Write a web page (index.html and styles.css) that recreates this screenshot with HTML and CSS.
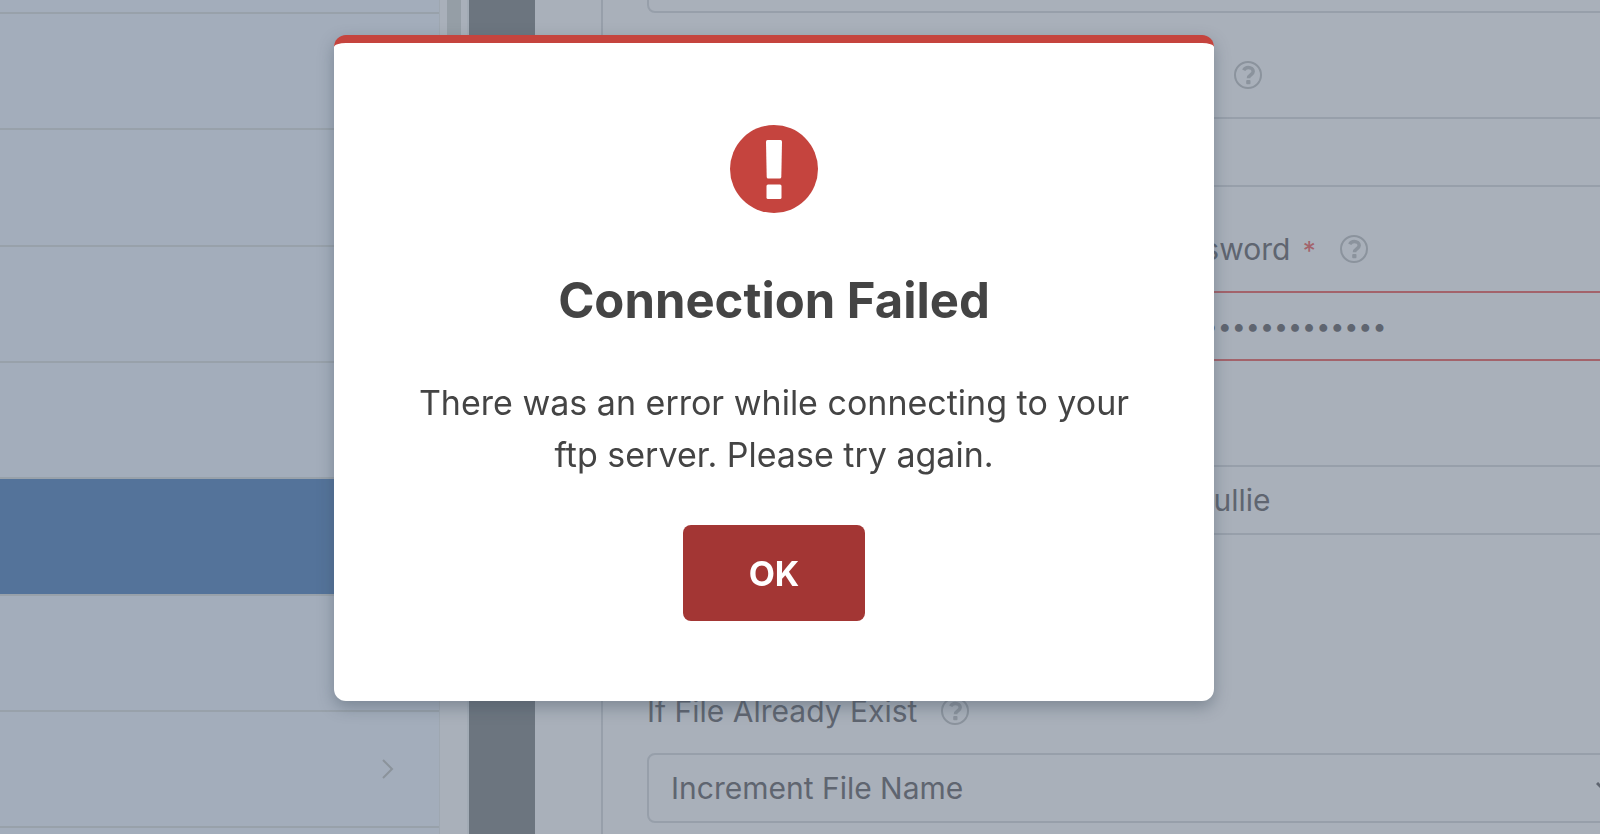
FILE: index.html
```html
<!DOCTYPE html>
<html lang="en">
<head>
  <meta charset="UTF-8" />
  <meta name="viewport" content="width=device-width, initial-scale=1.0" />
  <title>Connection Failed</title>
  <link rel="stylesheet" href="styles.css">
</head>
<body>
  <svg class="sprite" aria-hidden="true">
    <symbol id="help" viewBox="0 0 28 28">
      <circle cx="14" cy="14" r="13" fill="none" stroke="currentColor" stroke-width="2" />
      <path d="M9.700 9.300C10.700 7.400 12.200 6.500 14.200 6.500C17.200 6.500 19.200 8.200 19.200 10.600C19.200 13.800 14.500 13.600 14.500 17.200" fill="none" stroke="currentColor" stroke-width="3.500" />
      <rect x="12.200" y="19" width="4.300" height="4.300" rx="1" fill="currentColor" />
    </symbol>
  </svg>

  <div class="builder">
    <nav class="sidebar">
      <div class="side-item"></div>
      <div class="side-item"></div>
      <div class="side-item"></div>
      <div class="side-item"></div>
      <div class="side-item"></div>
      <div class="side-item active"></div>
      <div class="side-item"></div>
      <div class="side-item">
        <svg class="arrow" viewBox="0 0 12 20"><path d="M1 1L10 10L1 19" fill="none" stroke="currentColor" stroke-width="2" /></svg>
      </div>
      <div class="side-item"></div>
    </nav>
    <div class="scroll-track"><div class="scroll-thumb"></div></div>
    <div class="divider"></div>
    <main class="panel">
      <form class="settings">
        <input class="field first" type="text" aria-label="Name">
        <div class="row">
          <div class="group">
            <div class="label"></div>
            <input class="field" type="text" aria-label="Host">
          </div>
          <div class="group">
            <div class="label"><label for="port">Port</label><svg class="help"><use href="#help" /></svg></div>
            <input class="field" type="text" id="port">
          </div>
        </div>
        <div class="row">
          <div class="group">
            <div class="label"></div>
            <input class="field error" type="text" aria-label="Username">
          </div>
          <div class="group">
            <div class="label"><label for="password">Password <span class="required">*</span></label><svg class="help"><use href="#help" /></svg></div>
            <input class="field error" type="password" id="password" value="connection12345">
          </div>
        </div>
        <div class="row">
          <div class="group">
            <div class="label"></div>
            <input class="field" type="text" aria-label="Protocol">
          </div>
          <div class="group">
            <div class="label"></div>
            <input class="field" type="text" aria-label="Directory" value="/Mullie">
          </div>
        </div>
        <div class="group last">
          <div class="label"><label for="exist">If File Already Exist</label><svg class="help"><use href="#help" /></svg></div>
          <div class="select">
            <select class="field" id="exist">
              <option>Increment File Name</option>
            </select>
            <svg class="chevron" viewBox="0 0 20 12"><path d="M1 1L10 10L19 1" fill="none" stroke="currentColor" stroke-width="3" /></svg>
          </div>
        </div>
      </form>
    </main>
  </div>

  <div class="overlay">
    <div class="modal" role="alertdialog" aria-labelledby="modal-title" aria-describedby="modal-text">
      <svg class="modal-icon" viewBox="0 0 88 88">
        <circle cx="44" cy="44" r="44" fill="#c5443e" />
        <path d="M37.500 15H50.500Q52 15 52 16.500L51.300 52Q51.200 53.500 49.700 53.500H38.300Q36.800 53.500 36.700 52L36 16.500Q36 15 37.500 15Z" fill="#fff" />
        <rect x="36.500" y="59.500" width="15" height="14.500" rx="1.500" fill="#fff" />
      </svg>
      <h1 class="modal-title" id="modal-title">Connection Failed</h1>
      <p class="modal-text" id="modal-text">There was an error while connecting to your ftp server. Please try again.</p>
      <button class="ok-button" type="button">OK</button>
    </div>
  </div>
</body>
</html>
```
FILE: styles.css
```css
* {
  box-sizing: border-box;
}
html, body {
  height: 100%;
  overflow: hidden;
}
body {
  margin: 0;
  font-family: Inter, "Liberation Sans", sans-serif;
  font-size: 30px;
  color: #5f6570;
  background: #a9b0ba;
}
.sprite {
  display: none;
}
.builder {
  display: flex;
  height: 100%;
}
.sidebar {
  flex: 0 0 440px;
  overflow: hidden;
  background: #a3adbb;
  border-right: 1px solid #9ea7b1;
}
.side-item {
  display: flex;
  align-items: center;
  justify-content: flex-end;
  height: 116px;
  padding-right: 45px;
  border-bottom: 2px solid #98a1aa;
}
.side-item:nth-child(3n) {
  height: 117px;
}
.side-item:first-child {
  height: 14px;
}
.side-item.active {
  background: #54739a;
}
.arrow {
  width: 12px;
  height: 20px;
  color: #8b939b;
}
.scroll-track {
  flex: 0 0 29px;
  padding: 0 6px 0 7px;
  border-right: 2px solid #a2abb5;
}
.scroll-thumb {
  height: 80%;
  background: #959ea6;
}
.divider {
  flex: 0 0 66px;
  background: #6c757f;
}
.panel {
  flex: 1;
  min-width: 0;
  margin-left: 66px;
  border-left: 2px solid #979faa;
  overflow: hidden;
}
.settings {
  margin: -57px -40px 0 44px;
}
.row {
  display: grid;
  grid-template-columns: 1fr 1fr;
  column-gap: 16px;
}
.label {
  display: flex;
  align-items: center;
  gap: 24px;
  height: 104px;
  padding-top: 20px;
}
.required {
  margin-left: 4px;
  font-size: 26px;
  color: #a3636b;
}
.help {
  width: 28px;
  height: 28px;
  color: #8b939d;
}
.field {
  display: block;
  width: 100%;
  height: 70px;
  padding: 0 22px;
  border: 2px solid #979faa;
  border-radius: 8px;
  background: transparent;
  color: inherit;
  font: inherit;
  outline: none;
  appearance: none;
}
.field.error {
  border-color: #a3636b;
}
.field[type="password"] {
  font-size: 25px;
}
.last {
  margin-top: 114px;
}
.select {
  position: relative;
}
.chevron {
  position: absolute;
  top: 29px;
  right: 24px;
  width: 20px;
  height: 12px;
}
.overlay {
  position: fixed;
  inset: 0;
  display: flex;
  align-items: flex-start;
  justify-content: center;
  padding: 35px 52px 0 0;
}
.modal {
  display: flex;
  flex-direction: column;
  align-items: center;
  width: 880px;
  padding: 82px 80px 80px;
  border-top: 8px solid #c5443e;
  border-radius: 12px;
  background: #fff;
  box-shadow: 0 6px 16px rgba(60, 75, 90, 0.4);
  color: #444;
  text-align: center;
}
.modal-icon {
  width: 88px;
  height: 88px;
}
.modal-title {
  margin: 56px 0 44px;
  font-size: 49px;
  font-weight: 700;
  line-height: 64px;
}
.modal-text {
  margin: 0 0 44px;
  font-size: 34px;
  line-height: 52px;
}
.ok-button {
  width: 182px;
  height: 96px;
  border: none;
  border-radius: 8px;
  background: #a33634;
  color: #fff;
  font: inherit;
  font-size: 34px;
  font-weight: 700;
  cursor: pointer;
}
```
